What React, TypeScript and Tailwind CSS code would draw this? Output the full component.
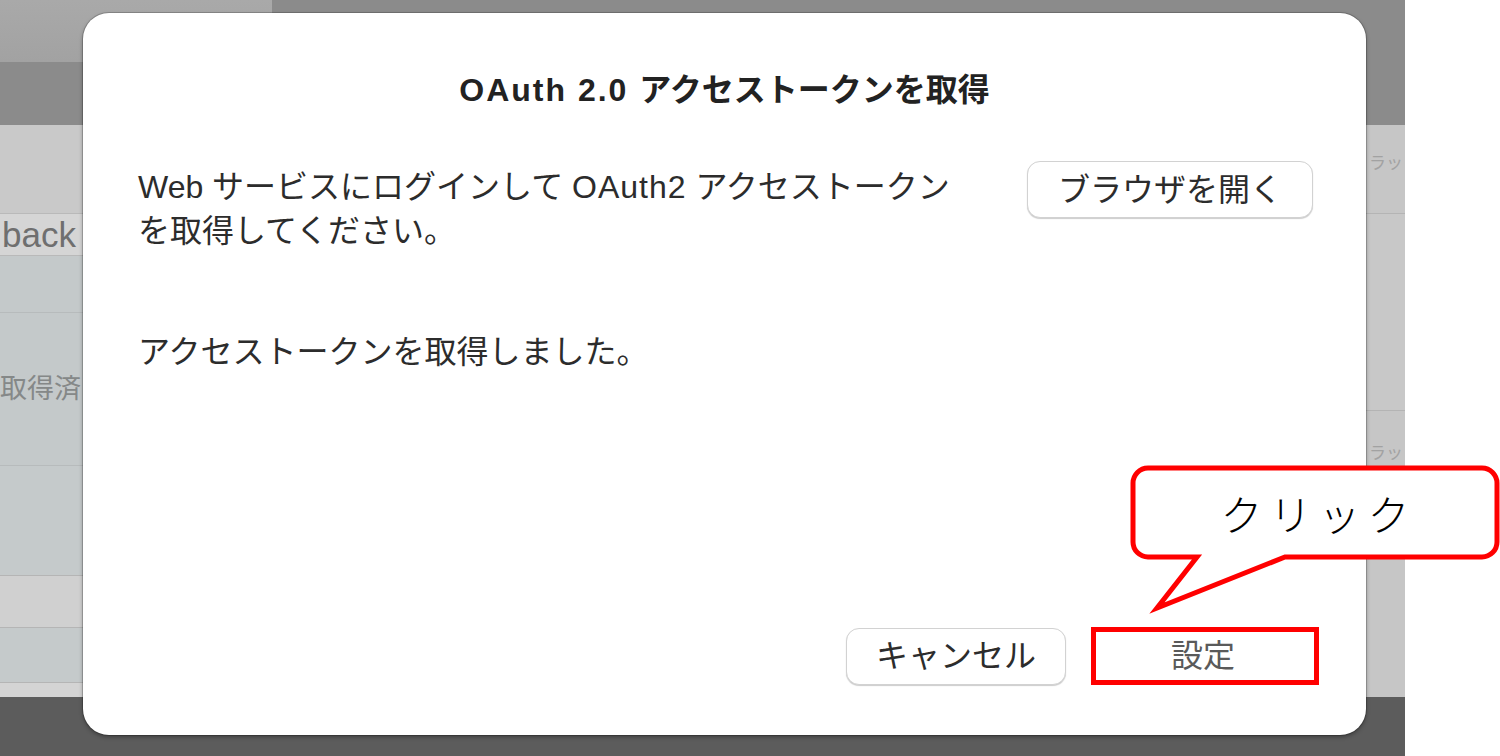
import React from "react";

const jp = "font-['Liberation_Sans','Noto_Sans_CJK_JP',sans-serif]";

function LeftStrip() {
  return (
    <div className="flex w-[83px] flex-col overflow-hidden">
      <div className="h-[88px] bg-[#c9c9c9]" />
      <div className="flex h-[43px] items-center border-y border-[#b9b9b9] bg-[#d5d5d5] pl-[2px]">
        <span className="whitespace-nowrap text-[35px] leading-none text-[#6f6f6f]">back</span>
      </div>
      <div className="h-[56px] bg-[#c4c9ca]" />
      <div className="flex h-[153px] items-center border-t border-[#b7bbbc] bg-[#c4c9ca]">
        <span className="whitespace-nowrap text-[27px] leading-none text-[#858888]">取得済</span>
      </div>
      <div className="h-[110px] border-t border-[#b7bbbc] bg-[#c5cacb]" />
      <div className="h-[52px] border-t border-[#b5b5b5] bg-[#d0d0d0]" />
      <div className="h-[56px] border-y border-[#b5b5b5] bg-[#c5cacb]" />
      <div className="flex-1 bg-[#d4d4d4]" />
    </div>
  );
}

function RightStrip() {
  return (
    <div className="flex w-[40px] flex-col overflow-hidden border-l border-[#8a8a8a]">
      <div className="flex h-[88px] items-start bg-[#c6c6c6] pl-[3px] pt-[30px]">
        <span className="whitespace-nowrap text-[17px] leading-none text-[#a2a2a2]">ラッ</span>
      </div>
      <div className="h-[197px] border-t border-[#b4b4b4] bg-[#c8c8c8]" />
      <div className="flex flex-1 items-start border-t border-[#b4b4b4] bg-[#c6c6c6] pl-[3px] pt-[34px]">
        <span className="whitespace-nowrap text-[17px] leading-none text-[#a2a2a2]">ラッ</span>
      </div>
    </div>
  );
}

function Callout() {
  return (
    <div className="absolute left-[1130px] top-[465px] h-[150px] w-[370px]">
      <svg width="370" height="150" viewBox="0 0 370 150" className="absolute left-0 top-0">
        <path
          d="M18 3 H352 A15 15 0 0 1 367 18 V77 A15 15 0 0 1 352 92 H155 L27 143 L67 92 H18 A15 15 0 0 1 3 77 V18 A15 15 0 0 1 18 3 Z"
          fill="#ffffff"
          stroke="#ff0000"
          strokeWidth="5"
          strokeLinejoin="miter"
        />
      </svg>
      <div className="absolute left-[3px] top-[3px] flex h-[89px] w-[364px] items-center justify-center pl-[7px]">
        <span className="font-['Noto_Sans_CJK_JP',sans-serif] text-[42px] font-light leading-none tracking-[7px] text-black">
          クリック
        </span>
      </div>
    </div>
  );
}

export default function App() {
  return (
    <div className={`relative h-[756px] w-[1500px] overflow-hidden bg-white ${jp}`}>
      {/* window behind the sheet */}
      <div className="flex h-full w-[1405px] flex-col">
        <div className="flex h-[62px]">
          <div className="w-[272px] bg-gradient-to-b from-[#a9a9a9] to-[#a2a2a2]" />
          <div className="flex-1 bg-[#8b8b8b]" />
        </div>
        <div className="h-[63px] bg-[#8b8b8b]" />
        <div className="flex flex-1">
          <LeftStrip />
          <div className="flex-1 bg-[#c8c8c8]" />
          <RightStrip />
        </div>
        <div className="h-[59px] bg-[#5c5c5c]" />
      </div>

      {/* sheet */}
      <div className="absolute left-[83px] top-[13px] flex h-[722px] w-[1283px] flex-col rounded-[26px] bg-white shadow-[0_0_0_1px_rgba(0,0,0,0.18),0_2px_4px_rgba(0,0,0,0.35)]">
        <h1 className="pt-[55px] text-center text-[32px] font-bold leading-[44px] text-[#222222]">
          <span className="tracking-[2px]">OAuth 2.0 </span>アクセストークンを取得
        </h1>

        <div className="mt-[49px] flex items-start justify-between pl-[55px] pr-[53px]">
          <p className="mt-[4px] whitespace-nowrap text-[32px] leading-[44px] text-[#2c2c2c]">
            Web サービスにログインして <span className="tracking-[1px]">OAuth2</span> アクセストークン
            <br />
            を取得してください。
          </p>
          <button className="flex h-[57px] w-[286px] items-center justify-center rounded-[13px] border border-[#d2d2d2] bg-white text-[32px] text-[#2c2c2c] shadow-[0_1px_1px_rgba(0,0,0,0.2)]">
            ブラウザを開く
          </button>
        </div>

        <p className="mt-[77px] pl-[55px] text-[32px] leading-[44px] text-[#2c2c2c]">
          アクセストークンを取得しました。
        </p>

        <div className="mt-auto flex items-center justify-end gap-[25px] pb-[50px] pr-[47px]">
          <button className="flex h-[57px] w-[220px] items-center justify-center rounded-[13px] border border-[#d2d2d2] bg-white text-[32px] text-[#2c2c2c] shadow-[0_1px_1px_rgba(0,0,0,0.2)]">
            キャンセル
          </button>
          <div className="flex h-[58px] w-[228px] items-center justify-center border-[5px] border-[#ff0000] bg-white pr-[4px] text-[32px] text-[#5a5a5a]">
            設定
          </div>
        </div>
      </div>

      <Callout />
    </div>
  );
}
